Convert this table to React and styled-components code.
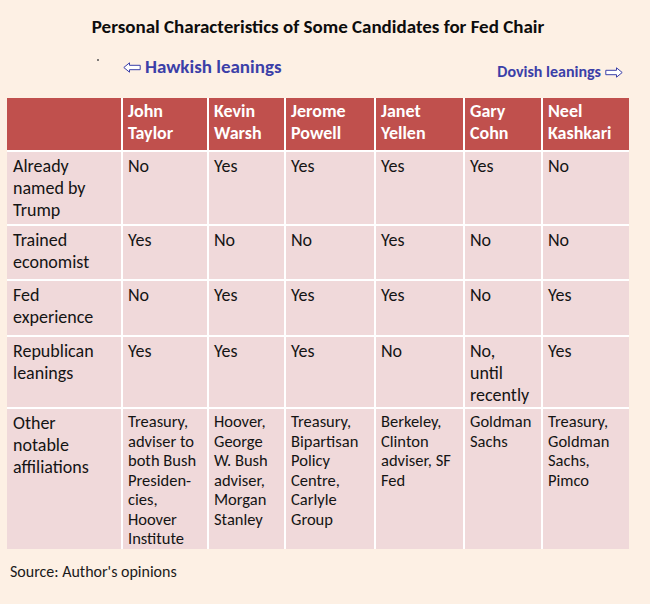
import React from "react";
import styled, { createGlobalStyle } from "styled-components";

const Global = createGlobalStyle`
  html, body { margin: 0; padding: 0; background: #fdf0e4; }
  body { font-family: Carlito, Lato, "Noto Sans", sans-serif; color: #111; }
`;

const Page = styled.div`
  width: 650px;
  height: 604px;
  background: #fdf0e4;
  box-sizing: border-box;
  padding: 16px 0 0 7px;
`;

const Content = styled.div`
  width: 622px;
`;

const Title = styled.h1`
  margin: 0;
  font-size: 19px;
  line-height: 22px;
  font-weight: 700;
  text-align: center;
  color: #0d0d0d;
`;

const Leanings = styled.div`
  height: 42px;
  margin-top: 18px;
  display: flex;
  justify-content: space-between;
  align-items: flex-start;
`;

const LeftGroup = styled.div`
  display: flex;
  align-items: flex-start;
`;

const Dot = styled.span`
  width: 2px;
  height: 2px;
  border-radius: 1px;
  background: #555;
  margin: 3px 0 0 90px;
`;

const Lean = styled.div`
  display: flex;
  align-items: center;
  gap: 4px;
  color: #3b3fa8;
  font-weight: 700;
  font-size: ${(p) => p.$size}px;
  line-height: ${(p) => p.$line}px;
  margin: ${(p) => p.$margin};
  white-space: nowrap;
`;

const Grid = styled.div`
  display: grid;
  grid-template-columns: 114px 84px 75px 88px 87px 76px 86px;
  grid-template-rows: 52px 72px 53px 54px 70px 140px;
  gap: 2px;
  background: #ffffff;
`;

const Cell = styled.div`
  background: ${(p) => (p.$head ? "#c0504d" : "#f0d9da")};
  color: ${(p) => (p.$head ? "#ffffff" : "#141414")};
  font-weight: ${(p) => (p.$head ? 700 : 400)};
  font-size: ${(p) => (p.$small ? 16.5 : 18)}px;
  line-height: ${(p) => (p.$small ? 19.5 : 22)}px;
  padding: ${(p) => (p.$head ? "2px 5px 0" : p.$first ? "3px 6px 0" : "3px 5px 0")};
  white-space: nowrap;
  overflow: hidden;
`;

const Source = styled.div`
  margin: 13px 0 0 3px;
  font-size: 16px;
  line-height: 20px;
  color: #1a1a1a;
`;

const Arrow = ({ dir }) => (
  <svg width="18" height="11" viewBox="0 0 18 11">
    <path
      d={
        dir === "left"
          ? "M0.8 5.5 L6.5 0.8 L6.5 3.3 L17.2 3.3 L17.2 7.7 L6.5 7.7 L6.5 10.2 Z"
          : "M17.2 5.5 L11.5 0.8 L11.5 3.3 L0.8 3.3 L0.8 7.7 L11.5 7.7 L11.5 10.2 Z"
      }
      fill="#ffffff"
      stroke="#3b3fa8"
      strokeWidth="1"
      strokeLinejoin="miter"
    />
  </svg>
);

const header = ["", "John\nTaylor", "Kevin\nWarsh", "Jerome\nPowell", "Janet\nYellen", "Gary\nCohn", "Neel\nKashkari"];

const rows = [
  ["Already\nnamed by\nTrump", "No", "Yes", "Yes", "Yes", "Yes", "No"],
  ["Trained\neconomist", "Yes", "No", "No", "Yes", "No", "No"],
  ["Fed\nexperience", "No", "Yes", "Yes", "Yes", "No", "Yes"],
  ["Republican\nleanings", "Yes", "Yes", "Yes", "No", "No,\nuntil\nrecently", "Yes"],
  [
    "Other\nnotable\naffiliations",
    "Treasury,\nadviser to\nboth Bush\nPresiden-\ncies,\nHoover\nInstitute",
    "Hoover,\nGeorge\nW. Bush\nadviser,\nMorgan\nStanley",
    "Treasury,\nBipartisan\nPolicy\nCentre,\nCarlyle\nGroup",
    "Berkeley,\nClinton\nadviser, SF\nFed",
    "Goldman\nSachs",
    "Treasury,\nGoldman\nSachs,\nPimco",
  ],
];

const Lines = ({ text }) =>
  text.split("\n").map((l, i, arr) => (
    <React.Fragment key={i}>
      {l}
      {i < arr.length - 1 && <br />}
    </React.Fragment>
  ));

export default function App() {
  return (
    <>
      <Global />
      <Page>
        <Content>
          <Title>Personal Characteristics of Some Candidates for Fed Chair</Title>
          <Leanings>
            <LeftGroup>
              <Dot />
              <Lean $size={19} $line={22} $margin="0 0 0 24px">
                <Arrow dir="left" />
                Hawkish leanings
              </Lean>
            </LeftGroup>
            <Lean $size={16} $line={20} $margin="6px 6px 0 0">
              Dovish leanings
              <Arrow dir="right" />
            </Lean>
          </Leanings>
          <Grid>
            {header.map((h, i) => (
              <Cell key={"h" + i} $head>
                <Lines text={h} />
              </Cell>
            ))}
            {rows.map((r, ri) =>
              r.map((c, ci) => (
                <Cell key={ri + "-" + ci} $first={ci === 0} $small={ri === 4 && ci > 0}>
                  <Lines text={c} />
                </Cell>
              ))
            )}
          </Grid>
          <Source>Source: Author's opinions</Source>
        </Content>
      </Page>
    </>
  );
}
